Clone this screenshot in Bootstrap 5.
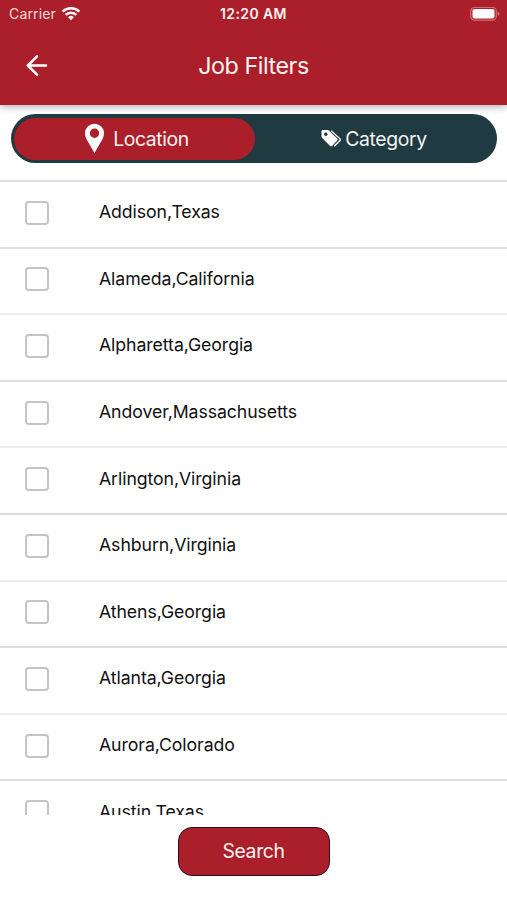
<!DOCTYPE html>
<html lang="en">
<head>
<meta charset="utf-8">
<meta name="viewport" content="width=device-width, initial-scale=1">
<title>Job Filters</title>
<link rel="stylesheet" href="https://cdn.jsdelivr.net/npm/bootstrap@5.3.0/dist/css/bootstrap.min.css">
<style>
  :root { --brand: #ab1f2b; --teal: #1f3a40; }
  body { font-family: Inter, "Liberation Sans", sans-serif; color: #111; background: #fff; }
  .screen { height: 900px; }
  .app-header { height: 104.5px; background: var(--brand); color: #fff3f1; box-shadow: 0 2px 7px rgba(0,0,0,.3); z-index: 1; }
  .status-bar { height: 28px; padding: 0 7px 0 9px; line-height: 28px; font-size: 14px; }
  .status-carrier { letter-spacing: .15px; color: #fbdcd9; }
  .status-time { font-weight: 600; letter-spacing: .4px; }
  .title-bar { height: 76px; padding: 0 25px; }
  .title-bar h1 { font-size: 23.3px; font-weight: 400; letter-spacing: -.45px; line-height: 76px; }
  .side { width: 80px; }
  .status-bar .side:first-child { width: 78px; }
  .tabs-area { height: 75.5px; padding: 9.5px 10px 0 11px; }
  .segmented { height: 49px; padding: 3.5px 2.5px; background: var(--teal); border-radius: 25px; }
  .segmented .nav-link { height: 42px; padding: 0; color: #f6f3f2; font-size: 19.4px; letter-spacing: -.4px; border-radius: 21px; line-height: 42px; }
  .segmented .nav-link.active { background: var(--brand); color: #fff3f1; padding-left: 5px; margin-right: -1px; }
  .places .list-group-item { height: 66.6px; padding: 0 25px 4px; border: 0; border-top: 2px solid #dedede; color: #111; }
  .places .list-group-item:nth-child(odd):not(:first-child) { border-top-color: #ededed; }
  .place-check { width: 24px; height: 24px; margin: 0; border: 2px solid #c4c4c4; border-radius: 5px; }
  .place-check.form-check-input { margin-top: 1px; }
  .place-name { margin-left: 50px; font-size: 17.7px; letter-spacing: -.08px; line-height: 24px; }
  .places { height: 634.5px; }
  .search-btn { width: 152px; height: 49px; margin-top: 12.5px; padding: 0; background: var(--brand); border: 1.5px solid #2b0e16; border-radius: 14px; color: #fff3f1; font-size: 19.4px; letter-spacing: -.35px; }
</style>
<script src="https://cdn.jsdelivr.net/npm/bootstrap@5.3.0/dist/js/bootstrap.bundle.min.js"></script>
</head>
<body>
<div class="screen d-flex flex-column overflow-hidden">
  <header class="app-header position-relative flex-shrink-0">
    <div class="status-bar d-flex justify-content-between align-items-center">
      <div class="side d-flex align-items-center">
        <span class="status-carrier">Carrier</span>
        <svg class="flex-shrink-0 ms-1" width="21" height="15" viewBox="-1 0 21 15" fill="none" stroke="#fff" stroke-width="2.500">
          <path d="M1.700 4.700a11.800 11.800 0 0 1 16.600 0M4.700 7.900a7.500 7.500 0 0 1 10.600 0"/>
          <path d="M10 13.200l-2.900-2.900a4.100 4.100 0 0 1 5.800 0z" fill="#fff" stroke="none"/>
        </svg>
      </div>
      <span class="status-time">12:20 AM</span>
      <div class="side d-flex justify-content-end">
        <svg width="30" height="15" viewBox="0 0 30 15">
          <rect x=".7" y=".4" width="25.600" height="12.700" rx="3.800" fill="none" stroke="#d06c74" stroke-width="1.200"/>
          <rect x="2.500" y="2.100" width="22" height="9.300" rx="2" fill="#fff"/>
          <path d="M27.700 4.500v4.600q2-.8 2-2.300t-2-2.300z" fill="#d06c74"/>
        </svg>
      </div>
    </div>
    <div class="title-bar d-flex justify-content-between align-items-center">
      <div class="side d-flex">
        <svg width="24" height="24" viewBox="0 0 24 24" fill="none" stroke="#fff" stroke-width="2.500" stroke-linecap="round" stroke-linejoin="round"><path d="M21 11.500H2.800M12 2.300L2.800 11.500l9.200 9.200"/></svg>
      </div>
      <h1 class="m-0">Job Filters</h1>
      <div class="side"></div>
    </div>
  </header>

  <div class="tabs-area flex-shrink-0">
    <nav class="segmented nav nav-fill flex-nowrap">
      <a class="nav-link active w-50 d-flex justify-content-center align-items-center" href="#">
        <svg class="me-2" width="21" height="31" viewBox="0 0 21 31" fill="#fff" fill-rule="evenodd"><path d="M10.500.8A9.500 9.500 0 0 0 1 10.300c0 6 5.500 11.600 9.500 19.900 4-8.300 9.500-13.900 9.500-19.900A9.500 9.500 0 0 0 10.500.8zm0 4.800a4.700 4.700 0 1 1 0 9.400 4.700 4.700 0 0 1 0-9.400z"/></svg>
        <span class="tab-label">Location</span>
      </a>
      <a class="nav-link w-50 d-flex justify-content-center align-items-center" href="#">
        <svg class="me-1" width="20" height="19" viewBox="0 0 20 19"><path d="M.5 2.300V7.600q0 .8.6 1.400l7.800 7.700q1.200 1.200 2.400 0l4.800-4.900q1.200-1.200 0-2.400L8.200 1.700Q7.500 1 6.600 1H1.800Q.5 1 .5 2.300z" fill="#fff"/><circle cx="4.800" cy="5.200" r="1.700" fill="#1f3a40"/><path d="M10.200 1.600L18.800 9.700q1 1 0 2L13.200 17.300" fill="none" stroke="#fff" stroke-width="1.300"/></svg>
        <span class="tab-label">Category</span>
      </a>
    </nav>
  </div>

  <div class="places list-group list-group-flush overflow-hidden flex-shrink-0">
    <label class="list-group-item d-flex align-items-center flex-shrink-0"><input class="form-check-input place-check" type="checkbox"><span class="place-name">Addison,Texas</span></label>
    <label class="list-group-item d-flex align-items-center flex-shrink-0"><input class="form-check-input place-check" type="checkbox"><span class="place-name">Alameda,California</span></label>
    <label class="list-group-item d-flex align-items-center flex-shrink-0"><input class="form-check-input place-check" type="checkbox"><span class="place-name">Alpharetta,Georgia</span></label>
    <label class="list-group-item d-flex align-items-center flex-shrink-0"><input class="form-check-input place-check" type="checkbox"><span class="place-name">Andover,Massachusetts</span></label>
    <label class="list-group-item d-flex align-items-center flex-shrink-0"><input class="form-check-input place-check" type="checkbox"><span class="place-name">Arlington,Virginia</span></label>
    <label class="list-group-item d-flex align-items-center flex-shrink-0"><input class="form-check-input place-check" type="checkbox"><span class="place-name">Ashburn,Virginia</span></label>
    <label class="list-group-item d-flex align-items-center flex-shrink-0"><input class="form-check-input place-check" type="checkbox"><span class="place-name">Athens,Georgia</span></label>
    <label class="list-group-item d-flex align-items-center flex-shrink-0"><input class="form-check-input place-check" type="checkbox"><span class="place-name">Atlanta,Georgia</span></label>
    <label class="list-group-item d-flex align-items-center flex-shrink-0"><input class="form-check-input place-check" type="checkbox"><span class="place-name">Aurora,Colorado</span></label>
    <label class="list-group-item d-flex align-items-center flex-shrink-0"><input class="form-check-input place-check" type="checkbox"><span class="place-name">Austin,Texas</span></label>
  </div>

  <footer class="d-flex justify-content-center">
    <button class="btn search-btn" type="button">Search</button>
  </footer>
</div>
</body>
</html>
